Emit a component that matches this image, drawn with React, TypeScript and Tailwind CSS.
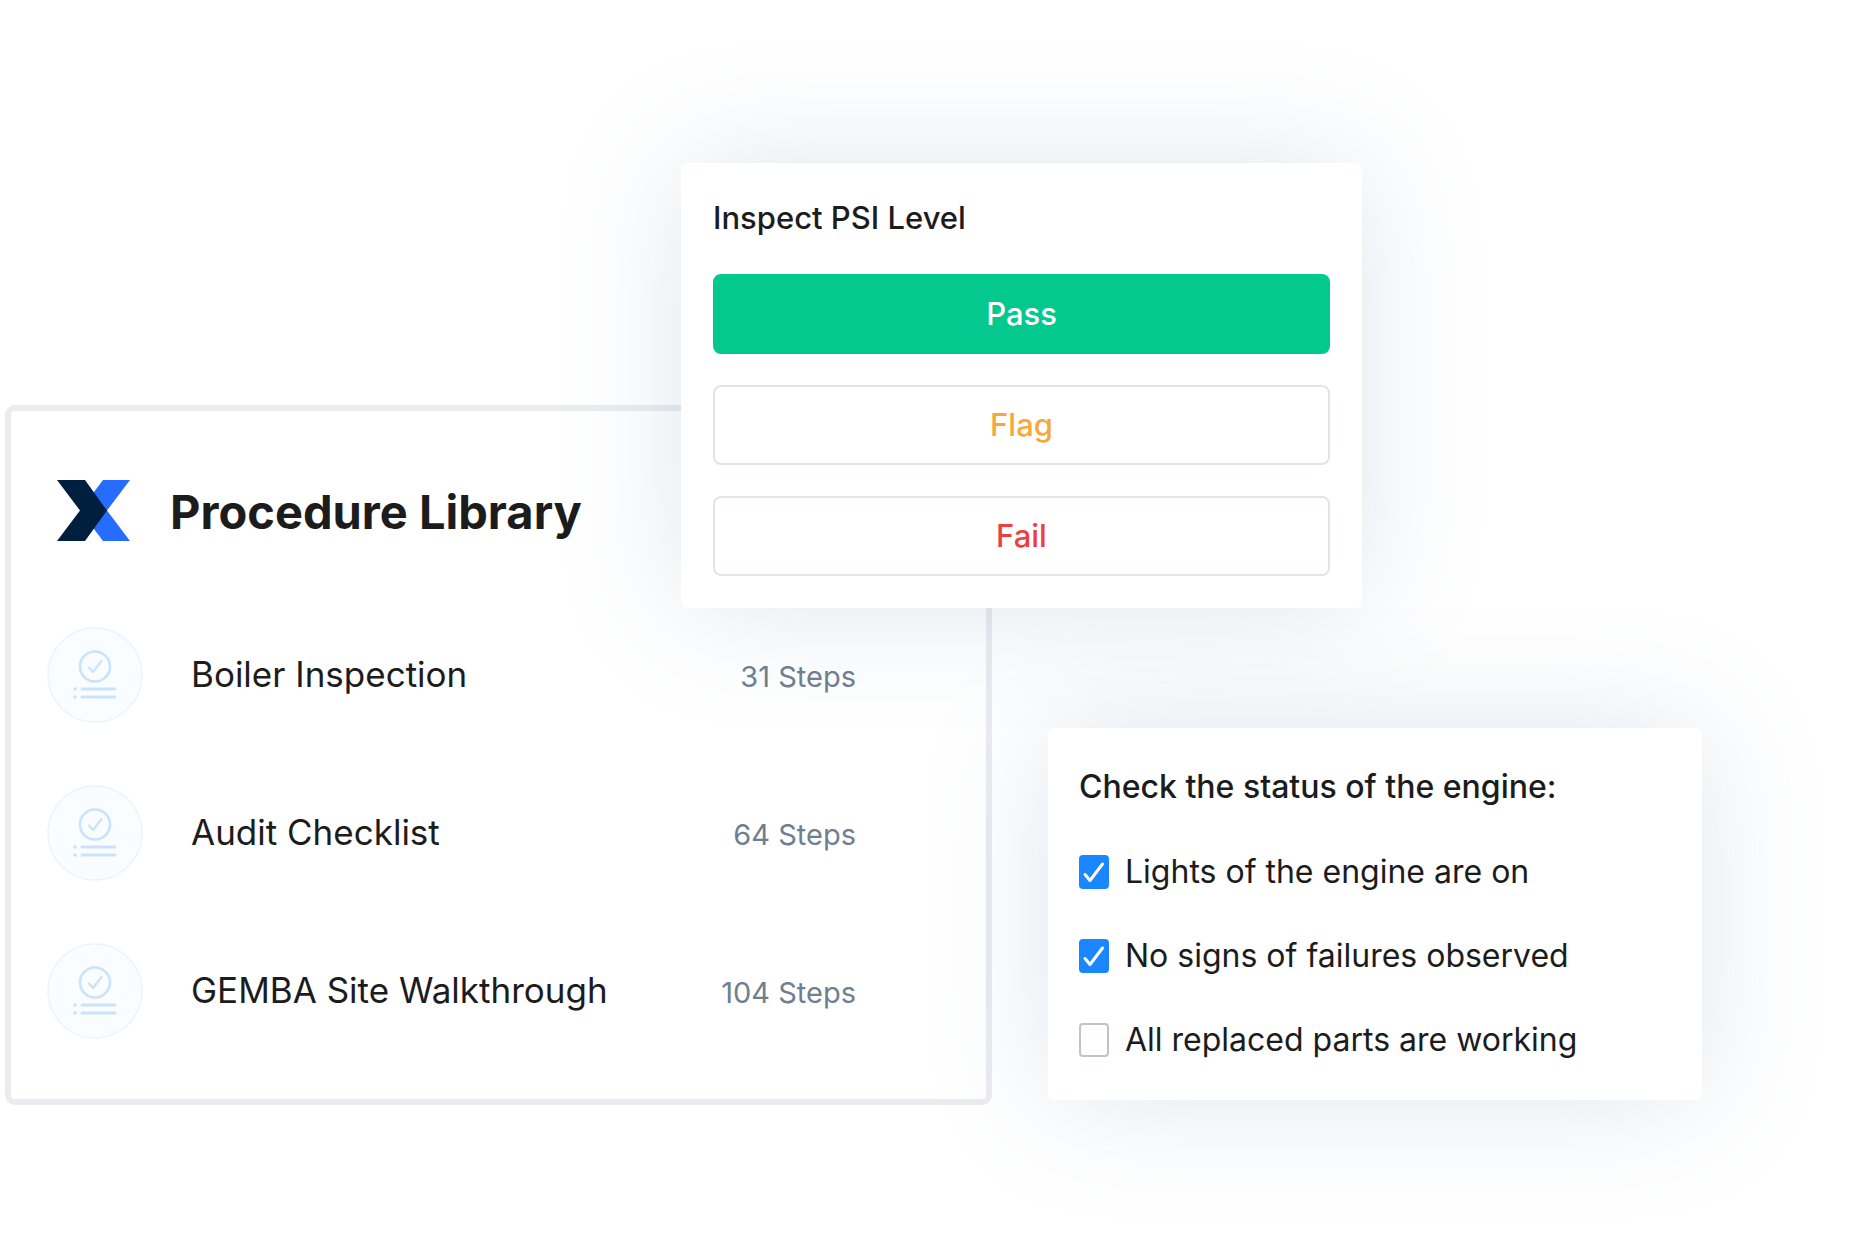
import { useState } from "react";

const PROCEDURES = [
  { name: "Boiler Inspection", steps: 31 },
  { name: "Audit Checklist", steps: 64 },
  { name: "GEMBA Site Walkthrough", steps: 104 },
];

const RESULTS = [
  { label: "Pass", className: "border-[#03c98f] bg-[#03c98f] text-white" },
  { label: "Flag", className: "border-[#e1e5ea] bg-white text-[#f5a93b]" },
  { label: "Fail", className: "border-[#e1e5ea] bg-white text-[#ee3f3f]" },
];

const CHECKS = [
  { id: "lights", label: "Lights of the engine are on", done: true },
  { id: "failures", label: "No signs of failures observed", done: true },
  { id: "parts", label: "All replaced parts are working", done: false },
];

function Logo() {
  return (
    <svg viewBox="0 0 73 61" className="h-[61px] w-[73px] shrink-0" aria-hidden="true">
      <path d="M46 0h27L50 30.500 73 61H46L23 30.500z" fill="#266dff" />
      <path d="M0 0h28l22 30.500L28 61H0l23-30.500z" fill="#001e3e" />
    </svg>
  );
}

function ProcedureIcon() {
  return (
    <svg viewBox="0 0 96 96" className="size-24 shrink-0" fill="none" aria-hidden="true">
      <circle cx="48" cy="48" r="47" fill="#fafdff" stroke="#ebf4fe" strokeWidth="1.500" />
      <g stroke="#cbe2fb" strokeLinecap="round" strokeLinejoin="round">
        <circle cx="48" cy="39.500" r="15" strokeWidth="2.600" />
        <path d="M42 40.500l4 4.500 8.500-11" strokeWidth="2.200" />
        <path d="M35 62h33M35 70h33" strokeWidth="3" />
        <path d="M28 62h.1M28 70h.1" strokeWidth="3.600" />
      </g>
    </svg>
  );
}

function ProcedureLibrary() {
  return (
    <section className="col-start-1 col-end-3 row-start-1 mt-[242px] rounded-[10px] border-6 border-[#ebecf0] bg-white pt-[69px] pr-[130px] pb-[60px] pl-9">
      <header className="flex h-16 items-start gap-10 pl-[10px]">
        <Logo />
        <h1 className="text-[47px] leading-[64px] font-bold">Procedure Library</h1>
      </header>
      <ul className="mt-[83px] flex flex-col gap-[62px]">
        {PROCEDURES.map((p) => (
          <li key={p.name} className="flex items-center gap-12">
            <ProcedureIcon />
            <div className="flex flex-1 items-baseline justify-between">
              <span className="text-[35px] leading-[48px]">{p.name}</span>
              <span className="text-[29px] leading-[48px] text-[#6f7f90]">{p.steps} Steps</span>
            </div>
          </li>
        ))}
      </ul>
    </section>
  );
}

function InspectCard() {
  return (
    <section className="col-start-2 col-end-5 row-start-1 rounded-md bg-white p-8 shadow-[0_0_125px_rgba(88,125,155,0.19)]">
      <h2 className="text-[31px] leading-[46px] font-medium">Inspect PSI Level</h2>
      <div className="mt-[33px] flex flex-col gap-[31px]">
        {RESULTS.map((r) => (
          <button
            key={r.label}
            type="button"
            className={`h-20 w-full rounded-lg border-2 text-[31px] font-medium ${r.className}`}
          >
            {r.label}
          </button>
        ))}
      </div>
    </section>
  );
}

function EngineCard() {
  const [done, setDone] = useState(() => CHECKS.filter((c) => c.done).map((c) => c.id));

  const toggle = (id: string) =>
    setDone((prev) => (prev.includes(id) ? prev.filter((d) => d !== id) : [...prev, id]));

  return (
    <section className="col-start-4 col-end-6 row-start-1 mt-[565px] rounded-md bg-white px-[31px] py-9 shadow-[0_0_125px_rgba(88,125,155,0.19)]">
      <h2 className="text-[32px] leading-[46px] font-medium">Check the status of the engine:</h2>
      <div className="mt-[38px] flex flex-col gap-9">
        {CHECKS.map((c) => (
          <label key={c.id} htmlFor={c.id} className="flex h-12 items-center gap-4">
            <span className="grid place-items-center">
              <input
                id={c.id}
                type="checkbox"
                checked={done.includes(c.id)}
                onChange={() => toggle(c.id)}
                className="peer col-start-1 row-start-1 h-[34px] w-[30px] appearance-none rounded-sm border-2 border-[#bcc5cf] bg-white checked:border-[#1a86ff] checked:bg-[#1a86ff]"
              />
              <svg
                viewBox="0 0 30 34"
                className="pointer-events-none invisible col-start-1 row-start-1 h-[34px] w-[30px] peer-checked:visible"
                fill="none"
                aria-hidden="true"
              >
                <path d="M6 19.500l5 6L23.500 9" stroke="#fff" strokeWidth="3" strokeLinecap="round" strokeLinejoin="round" />
              </svg>
            </span>
            <span className="text-[32px] leading-[48px]">{c.label}</span>
          </label>
        ))}
      </div>
    </section>
  );
}

export default function App() {
  return (
    <main className="grid min-h-screen grid-cols-[676fr_311fr_56fr_314fr_340fr] items-start overflow-hidden bg-white pt-[163px] pr-[162px] pb-[154px] pl-[5px] font-['Inter',sans-serif] text-[#1c1c1d]">
      <ProcedureLibrary />
      <InspectCard />
      <EngineCard />
    </main>
  );
}
